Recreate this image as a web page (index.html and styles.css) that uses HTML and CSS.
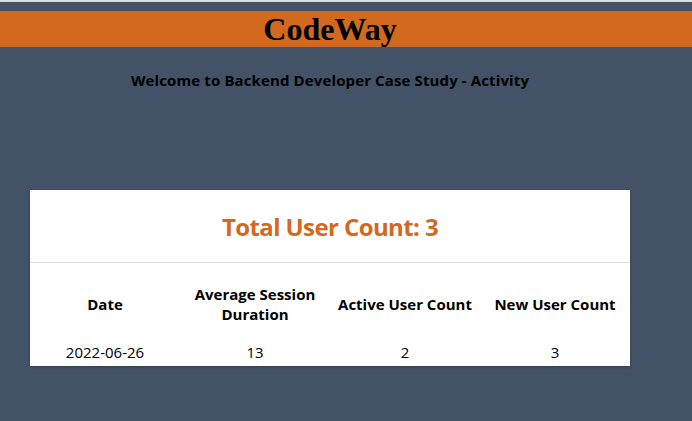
FILE: index.html
```html
<!DOCTYPE html>
<html lang="en">
<head>
<meta charset="utf-8">
<title>CodeWay</title>
<link rel="stylesheet" href="styles.css">
</head>
<body>
<header class="brand">
  <h1 class="brand-title">CodeWay</h1>
</header>
<main class="page">
  <p class="welcome">Welcome to Backend Developer Case Study - Activity</p>
  <section class="card">
    <h2 class="card-title">Total User Count: 3</h2>
    <table class="stats">
      <thead>
        <tr>
          <th>Date</th>
          <th>Average Session Duration</th>
          <th>Active User Count</th>
          <th>New User Count</th>
        </tr>
      </thead>
      <tbody>
        <tr>
          <td>2022-06-26</td>
          <td>13</td>
          <td>2</td>
          <td>3</td>
        </tr>
      </tbody>
    </table>
  </section>
</main>
</body>
</html>
```

FILE: styles.css
```css
html, body {
  margin: 0;
  padding: 0;
}

body {
  background: #435266;
  border-top: 2px solid #dcdcdc;
  font-family: "Open Sans", "Noto Sans", sans-serif;
  color: #000;
  min-height: 419px;
}

.brand {
  margin-top: 9px;
  background: #d2691e;
  height: 36px;
}

.brand-title {
  width: 660px;
  margin: 0;
  text-align: center;
  font-family: "Liberation Serif", "Times New Roman", serif;
  font-weight: bold;
  font-size: 32px;
  line-height: 36px;
}

.page {
  width: 660px;
}

.welcome {
  margin: 23px 0 0;
  text-align: center;
  font-weight: bold;
  font-size: 15px;
  line-height: 20px;
  letter-spacing: 0.12px;
}

.card {
  width: 600px;
  margin: 100px auto 0;
  background: #fff;
  box-shadow: 0 1px 3px rgba(0, 0, 0, 0.25);
}

.card-title {
  margin: 0;
  padding: 21px 0 19px;
  text-align: center;
  color: #d2691e;
  font-size: 24px;
  line-height: 32px;
  font-weight: bold;
  letter-spacing: -0.6px;
  border-bottom: 1px solid #e0e0e0;
}

.stats {
  width: 100%;
  table-layout: fixed;
  border-collapse: collapse;
  font-size: 15px;
  line-height: 20px;
}

.stats th {
  padding: 21px 8px 10px;
  font-weight: bold;
  text-align: center;
  vertical-align: middle;
}

.stats td {
  padding: 8px 8px 4px;
  text-align: center;
}
```
